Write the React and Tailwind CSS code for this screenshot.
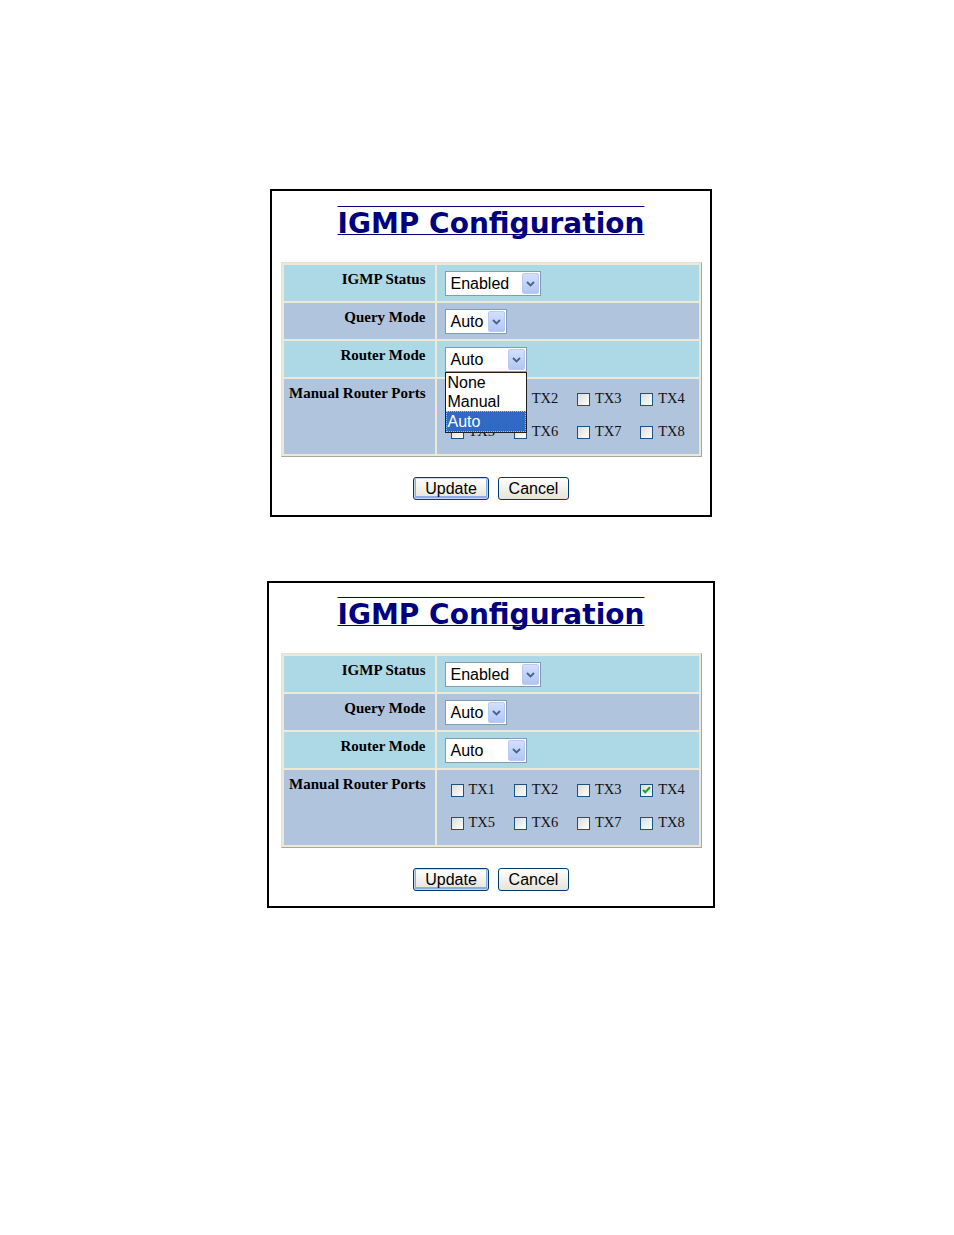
import React from 'react';

// ── Small form pieces (XP-era look) ───────────────────────────────────────────
function Select({ value, width, open }) {
  return (
    <div className={`relative ${width}`}>
      <div className="flex h-[25px] items-center border border-[#7f9db9] bg-white pl-[5px] font-['Liberation_Sans'] text-[16px] text-black">
        {value}
        <div className="absolute top-[2px] right-[2px] bottom-[2px] flex w-[17px] items-center justify-center rounded-[2px] border border-[#b9cbf3] bg-gradient-to-b from-[#d3e0fd] to-[#b1c6f5]">
          <svg width="9" height="6" viewBox="0 0 9 6">
            <path d="M1 1l3.5 3.5L8 1" fill="none" stroke="#4d6185" strokeWidth="1.8" />
          </svg>
        </div>
      </div>
      {open && (
        <div className="absolute top-full left-0 z-10 w-full border border-[#1f1f1f] bg-white font-['Liberation_Sans'] text-[16px] leading-[19px] text-black">
          <div className="px-[2px]">None</div>
          <div className="px-[2px]">Manual</div>
          <div className="border border-dotted border-[#d8c070] bg-[#316ac5] px-[1px] text-white">Auto</div>
        </div>
      )}
    </div>
  );
}

function Checkbox({ label, checked }) {
  return (
    <div className="flex h-[20px] items-center gap-[5px]">
      <div className="flex h-[13px] w-[13px] items-center justify-center border border-[#1c5180] bg-gradient-to-br from-[#dcdcd7] to-white">
        {checked && (
          <svg width="9" height="8" viewBox="0 0 9 8">
            <path d="M1 4l2.3 2.3L8 1.3" fill="none" stroke="#21a121" strokeWidth="2" />
          </svg>
        )}
      </div>
      <span className="font-['Liberation_Serif'] text-[14.5px] text-[#111]">{label}</span>
    </div>
  );
}

function Button({ children, width, primary }) {
  return (
    <button
      className={`h-[23px] ${width} rounded-[3px] border border-[#003c74] bg-gradient-to-b from-white to-[#e6e3d6] font-['Liberation_Sans'] text-[16px] leading-none text-black ${
        primary ? 'shadow-[inset_0_0_0_1px_#c3d4f7,inset_0_-1px_0_2px_#89ade4]' : ''
      }`}
    >
      {children}
    </button>
  );
}

const labelCell = "pt-[6px] pr-[9px] text-right font-['Liberation_Serif'] text-[15px] font-bold leading-[16px] text-black";

// ── One configuration panel ──────────────────────────────────────────────────
function IgmpPanel({ width, top, open, checked }) {
  const ports = ['TX1', 'TX2', 'TX3', 'TX4', 'TX5', 'TX6', 'TX7', 'TX8'];
  return (
    <div className={`flex ${width} flex-col items-center border-2 border-black bg-white ${top} pb-[15px]`}>
      <h1 className="font-['DejaVu_Sans'] text-[28px] font-bold text-[#00007f] [text-decoration-line:underline_overline] [text-decoration-skip-ink:none] decoration-1">
        IGMP Configuration
      </h1>

      <div className="mt-[17px] grid w-[421px] grid-cols-[151px_262px] gap-[2px] border border-t-[#e4e1d2] border-l-[#e4e1d2] border-r-[#a9a797] border-b-[#a9a797] bg-[#ece9d8] p-[2px]">
        <div className={`h-[36px] bg-[#add8e6] ${labelCell}`}>IGMP Status</div>
        <div className="h-[36px] bg-[#add8e6] pt-[6px] pl-[8px]">
          <Select value="Enabled" width="w-[96px]" />
        </div>

        <div className={`h-[36px] bg-[#b0c4de] ${labelCell}`}>Query Mode</div>
        <div className="h-[36px] bg-[#b0c4de] pt-[6px] pl-[8px]">
          <Select value="Auto" width="w-[62px]" />
        </div>

        <div className={`h-[36px] bg-[#add8e6] ${labelCell}`}>Router Mode</div>
        <div className="relative z-10 h-[36px] bg-[#add8e6] pt-[6px] pl-[8px]">
          <Select value="Auto" width="w-[82px]" open={open} />
        </div>

        <div className={`h-[75px] bg-[#b0c4de] ${labelCell}`}>Manual Router Ports</div>
        <div className="h-[75px] bg-[#b0c4de] pt-[10px] pl-[14px]">
          <div className="grid w-[253px] grid-cols-4 gap-y-[13px]">
            {ports.map((p) => (
              <Checkbox key={p} label={p} checked={checked.includes(p)} />
            ))}
          </div>
        </div>
      </div>

      <div className="mt-[20px] flex gap-[9px]">
        <Button width="w-[76px]" primary>Update</Button>
        <Button width="w-[71px]">Cancel</Button>
      </div>
    </div>
  );
}

export default function App() {
  return (
    <div className="flex min-h-[1235px] w-full flex-col items-center bg-white pt-[189px] pl-[28px]">
      <IgmpPanel width="w-[442px]" top="pt-[12px]" open checked={[]} />
      <div className="h-[64px]" />
      <IgmpPanel width="w-[448px]" top="pt-[11px]" checked={['TX4']} />
    </div>
  );
}
